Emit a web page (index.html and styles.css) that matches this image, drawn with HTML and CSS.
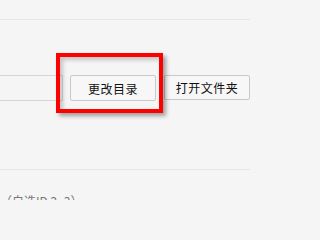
FILE: index.html
```html
<!DOCTYPE html>
<html lang="zh-CN">
<head>
<meta charset="utf-8">
<link rel="stylesheet" href="styles.css">
</head>
<body>
<div class="page">
  <div class="top-section"></div>
  <div class="dir-row">
    <div class="path-input"></div>
    <div class="btn-wrap">
      <button class="btn btn-change">更改目录</button>
      <div class="highlight"></div>
    </div>
    <button class="btn btn-open">打开文件夹</button>
  </div>
  <div class="divider"></div>
  <div class="hint">（自选ID 2~3）</div>
</div>
</body>
</html>
```

FILE: styles.css
```css
html, body {
  margin: 0;
  padding: 0;
  background: #f5f5f5;
  overflow: hidden;
}
body {
  width: 300px;
  height: 200px;
  font-family: "Noto Sans CJK SC", "Noto Sans", sans-serif;
}
.page {
  display: flex;
  flex-direction: column;
}
.top-section {
  width: 250px;
  height: 19px;
  border-bottom: 1px solid #e6e6e6;
}
.dir-row {
  display: flex;
  align-items: flex-start;
  margin-top: 55px;
}
.path-input {
  width: 62px;
  height: 24px;
  border: 1px solid #d6d6d6;
  border-left: none;
  background: #f5f5f5;
  box-sizing: content-box;
}
.btn-wrap {
  position: relative;
  margin-left: 7px;
}
.btn {
  display: flex;
  align-items: center;
  justify-content: center;
  box-sizing: border-box;
  width: 86px;
  height: 26px;
  padding: 0;
  border: 1px solid #c9c9c9;
  border-radius: 2px;
  background: #f7f7f7;
  color: #111;
  font-family: "Noto Sans CJK SC", "Noto Sans", sans-serif;
  font-size: 12px;
  letter-spacing: 0.5px;
}
.btn-open {
  margin-left: 8px;
  height: 25px;
}
.highlight {
  position: absolute;
  left: -14px;
  top: -22px;
  width: 107px;
  height: 60px;
  box-sizing: border-box;
  border: 4px solid #ff0000;
  box-shadow: 3px 3px 4px rgba(0, 0, 0, 0.35), inset 3px 3px 4px rgba(0, 0, 0, 0.2);
  pointer-events: none;
}
.divider {
  width: 250px;
  height: 0;
  border-top: 1px solid #e6e6e6;
  margin-top: 68px;
}
.hint {
  margin-top: 23px;
  margin-left: 0;
  font-size: 12px;
  line-height: 16px;
  color: #777;
}
```
